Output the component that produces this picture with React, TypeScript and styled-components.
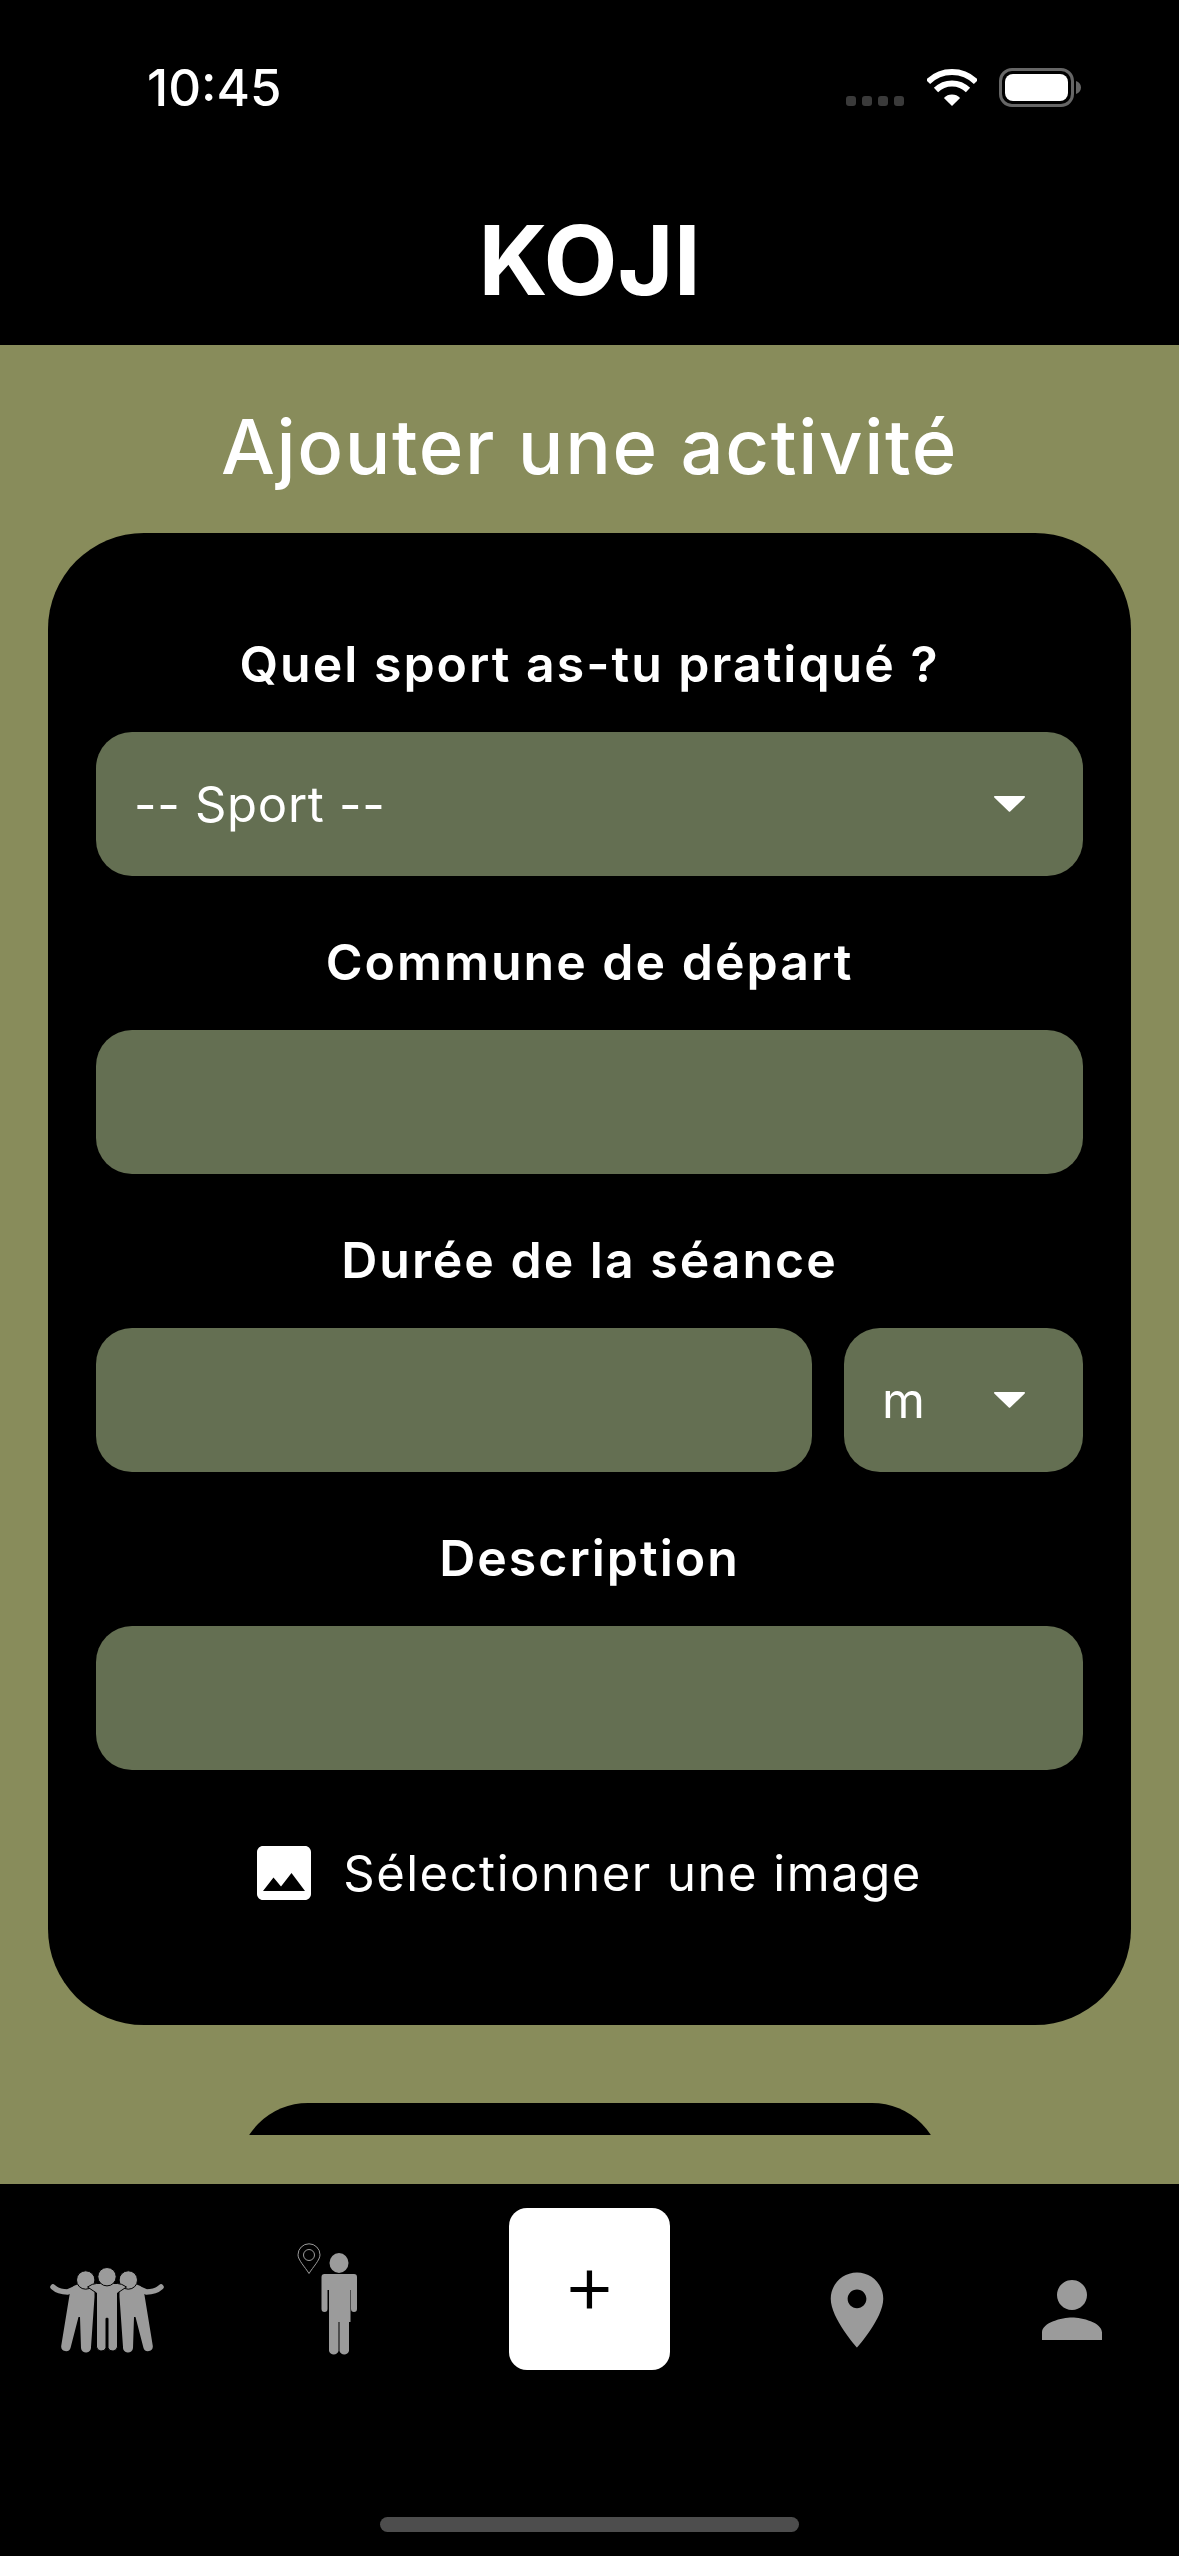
import React from "react";
import styled, { createGlobalStyle } from "styled-components";

const Global = createGlobalStyle`
  html, body { margin: 0; padding: 0; background: #000; }
  * { box-sizing: border-box; }
`;

const Screen = styled.div`
  width: 1179px;
  height: 2556px;
  display: flex;
  flex-direction: column;
  background: #000;
  color: #fff;
  font-family: Inter, "Liberation Sans", sans-serif;
  overflow: hidden;
`;

const Header = styled.header`
  height: 345px;
  flex: none;
  display: flex;
  flex-direction: column;
  background: #000;
`;

const StatusBar = styled.div`
  height: 107px;
  padding: 0 98px 0 147px;
  display: flex;
  align-items: flex-end;
  justify-content: space-between;
`;

const Clock = styled.span`
  font-size: 51px;
  font-weight: 500;
  line-height: 50px;
  height: 50px;
  margin-bottom: -6px;
`;

const StatusIcons = styled.div`
  display: flex;
  align-items: flex-end;
`;

const SignalDots = styled.div`
  display: flex;
  gap: 6px;
  margin: 0 23px 1px 0;
`;

const SignalDot = styled.span`
  width: 10px;
  height: 10px;
  border-radius: 3px;
  background: #3a3a3a;
`;

const Wifi = styled.svg`
  width: 50px;
  height: 37px;
  margin: 0 22px 1px 0;
`;

const Battery = styled.div`
  width: 75px;
  height: 39px;
  padding: 3px;
  border: 3px solid #666;
  border-radius: 13px;
`;

const BatteryFill = styled.div`
  width: 100%;
  height: 100%;
  border-radius: 8px;
  background: #fff;
`;

const BatteryNub = styled.svg`
  width: 5px;
  height: 13px;
  margin: 0 0 13px 2px;
`;

const Brand = styled.h1`
  margin: 0;
  flex: 1;
  display: flex;
  align-items: center;
  justify-content: center;
  padding-top: 68px;
  font-size: 96px;
  font-weight: 700;
  line-height: 1;
`;

const Main = styled.main`
  flex: 1;
  min-height: 0;
  padding: 0 0 49px;
  display: flex;
  background: #888c5b;
`;

const Scroller = styled.div`
  flex: 1;
  min-height: 0;
  overflow: hidden;
  padding: 0 48px;
  display: flex;
  flex-direction: column;
`;

const PageTitle = styled.h2`
  margin: 0;
  height: 188px;
  padding-top: 14px;
  flex: none;
  display: flex;
  align-items: center;
  justify-content: center;
  font-size: 76px;
  font-weight: 500;
  letter-spacing: 1.6px;
`;

const Card = styled.section`
  flex: none;
  background: #000;
  border-radius: 96px;
  padding: 45px 48px 125px;
  display: flex;
  flex-direction: column;
`;

const Label = styled.label`
  height: 154px;
  padding-top: 18px;
  display: flex;
  align-items: center;
  justify-content: center;
  font-size: 50px;
  font-weight: 600;
  letter-spacing: 2px;
`;

const fieldCss = `
  height: 144px;
  border-radius: 36px;
  background: #646f52;
  border: 0;
  color: #fff;
  font-family: Inter, "Liberation Sans", sans-serif;
  font-size: 49px;
`;

const TextField = styled.input`
  ${fieldCss}
  display: block;
  flex: 1;
  min-width: 0;
  width: 100%;
  padding: 0 38px;
  outline: none;
`;

const Select = styled.div<{ $width?: number }>`
  ${fieldCss}
  flex: ${(p) => (p.$width ? `0 0 ${p.$width}px` : "1")};
  padding: 0 58px 0 38px;
  display: flex;
  align-items: center;
  justify-content: space-between;
  letter-spacing: 0.7px;
`;

const Caret = styled.svg`
  width: 31px;
  height: 16px;
  fill: #fff;
`;

const FieldRow = styled.div`
  display: flex;
  gap: 32px;
`;

const ImagePicker = styled.div`
  margin-top: 76px;
  height: 54px;
  display: flex;
  align-items: center;
  justify-content: center;
  gap: 32px;
  font-size: 49px;
  letter-spacing: 1.5px;
`;

const ImageIcon = styled.svg`
  width: 54px;
  height: 54px;
  fill: #fff;
  flex: none;
`;

const SubmitPeek = styled.div`
  flex: none;
  align-self: center;
  width: 704px;
  height: 144px;
  margin-top: 78px;
  border-radius: 70px;
  background: #000;
`;

const TabBar = styled.nav`
  height: 372px;
  flex: none;
  padding-top: 24px;
  display: flex;
  flex-direction: column;
  background: #000;
`;

const Tabs = styled.div`
  display: grid;
  grid-template-columns: 214px 225px 301px 234px 195px;
  height: 204px;
`;

const TabCell = styled.div<{ $raise?: number }>`
  display: flex;
  align-items: center;
  justify-content: center;
  padding-bottom: ${(p) => p.$raise ?? 0}px;
`;

const PlusCell = styled.div`
  display: flex;
  align-items: flex-start;
  justify-content: center;
`;

const PlusButton = styled.div`
  width: 161px;
  height: 162px;
  padding-bottom: 12px;
  border-radius: 18px;
  background: #fff;
  color: #000;
  display: flex;
  align-items: center;
  justify-content: center;
  font-size: 84px;
  font-weight: 300;
  line-height: 1;
`;

const TabIcon = styled.svg<{ $w: number; $h: number }>`
  width: ${(p) => p.$w}px;
  height: ${(p) => p.$h}px;
  fill: #9b9b9b;
  flex: none;
`;

const HomeIndicator = styled.div`
  width: 419px;
  height: 15px;
  margin: 105px auto 0;
  border-radius: 8px;
  background: #4d4d4d;
`;

const CaretIcon = () => (
  <Caret viewBox="0 0 31 16">
    <path d="M1 0h29c.9 0 1.3 1 .7 1.6L16.2 15.4c-.4.4-1 .4-1.4 0L.3 1.6C-.3 1 .1 0 1 0z" />
  </Caret>
);

const GroupSide = () => (
  <>
    <path d="M2.5 20Q8 25 17 25L24 22" fill="none" stroke="#9b9b9b" strokeWidth="5.5" strokeLinecap="round" />
    <path d="M20 22Q22 19 28 17L44 18V30L40.5 80a5 5 0 0 1-10 1L29.5 50H28L20 81a4.8 4.8 0 0 1-9.3-2Z" />
    <circle cx="35.2" cy="13" r="9.2" stroke="#000" strokeWidth="1" />
  </>
);

export default function App() {
  return (
    <Screen>
      <Global />
      <Header>
        <StatusBar>
          <Clock>10:45</Clock>
          <StatusIcons>
            <SignalDots>
              <SignalDot />
              <SignalDot />
              <SignalDot />
              <SignalDot />
            </SignalDots>
            <Wifi viewBox="0 0 50 37">
              <path d="M1 13A34 34 0 0 1 49 13" fill="none" stroke="#fff" strokeWidth="6" />
              <path d="M9 21A22.7 22.7 0 0 1 41 21" fill="none" stroke="#fff" strokeWidth="6" />
              <path d="M25 37L16.9 28.9A11.5 11.5 0 0 1 33.1 28.9Z" fill="#fff" />
            </Wifi>
            <Battery>
              <BatteryFill />
            </Battery>
            <BatteryNub viewBox="0 0 5 13">
              <path d="M0 0c3 1 5 3.5 5 6.5S3 12 0 13Z" fill="#666" />
            </BatteryNub>
          </StatusIcons>
        </StatusBar>
        <Brand>KOJI</Brand>
      </Header>

      <Main>
        <Scroller>
          <PageTitle>Ajouter une activité</PageTitle>
          <Card>
            <Label>Quel sport as-tu pratiqué ?</Label>
            <FieldRow>
              <Select>
                -- Sport --
                <CaretIcon />
              </Select>
            </FieldRow>
            <Label>Commune de départ</Label>
            <FieldRow>
              <TextField readOnly />
            </FieldRow>
            <Label>Durée de la séance</Label>
            <FieldRow>
              <TextField readOnly />
              <Select $width={239}>
                m
                <CaretIcon />
              </Select>
            </FieldRow>
            <Label>Description</Label>
            <FieldRow>
              <TextField readOnly />
            </FieldRow>
            <ImagePicker>
              <ImageIcon viewBox="3 3 18 18">
                <path d="M21 19V5c0-1.1-.9-2-2-2H5c-1.1 0-2 .9-2 2v14c0 1.1.9 2 2 2h14c1.1 0 2-.9 2-2zM8.5 13.5l2.5 3.01L14.5 12l4.5 6H5l3.5-4.5z" />
              </ImageIcon>
              Sélectionner une image
            </ImagePicker>
          </Card>
          <SubmitPeek />
        </Scroller>
      </Main>

      <TabBar>
        <Tabs>
          <TabCell>
            <TabIcon $w={114} $h={86} viewBox="0 0 113 86">
              <GroupSide />
              <g transform="translate(113 0) scale(-1 1)">
                <GroupSide />
              </g>
              <path
                d="M37 20Q42 16.500 46 16.500H67Q71 16.500 76 20L67 26V80a5 5 0 0 1-9.500 1V51.300H55.500V81a5 5 0 0 1-9.500-1V26Z"
                stroke="#000"
                strokeWidth="1"
              />
              <circle cx="56.500" cy="9.700" r="9.200" stroke="#000" strokeWidth="1" />
            </TabIcon>
          </TabCell>
          <TabCell $raise={20}>
            <TabIcon $w={60} $h={114} viewBox="0 0 60 114">
              <path
                d="M12 30.500C8 24 1 17 1 11.800A11 11 0 0 1 23 11.800C23 17 16 24 12 30.500Z"
                fill="none"
                stroke="#9b9b9b"
                strokeWidth="1"
              />
              <circle cx="12" cy="12" r="5.500" fill="none" stroke="#9b9b9b" strokeWidth="1" />
              <ellipse cx="42" cy="20" rx="9.500" ry="10" />
              <path d="M27.500 31H57a3 3 0 0 1 3 3V66a3 3 0 0 1-6 0V47H53.500V79H52V108a5 5 0 0 1-9.500 0V79H41.500V108a5 5 0 0 1-9.500 0V47H30.500V66a3 3 0 0 1-6 0V34a3 3 0 0 1 3-3Z" />
            </TabIcon>
          </TabCell>
          <PlusCell>
            <PlusButton>+</PlusButton>
          </PlusCell>
          <TabCell>
            <TabIcon $w={90} $h={90} viewBox="0 0 24 24">
              <path d="M12 2C8.130 2 5 5.130 5 9c0 5.250 7 13 7 13s7-7.750 7-13c0-3.870-3.130-7-7-7zm0 9.500c-1.380 0-2.500-1.120-2.500-2.500s1.120-2.500 2.500-2.500 2.500 1.120 2.500 2.500-1.120 2.500-2.500 2.500z" />
            </TabIcon>
          </TabCell>
          <TabCell>
            <TabIcon $w={90} $h={90} viewBox="0 0 24 24">
              <path d="M12 12c2.210 0 4-1.790 4-4s-1.790-4-4-4-4 1.790-4 4 1.790 4 4 4zm0 2c-2.670 0-8 1.340-8 4v2h16v-2c0-2.660-5.330-4-8-4z" />
            </TabIcon>
          </TabCell>
        </Tabs>
        <HomeIndicator />
      </TabBar>
    </Screen>
  );
}
